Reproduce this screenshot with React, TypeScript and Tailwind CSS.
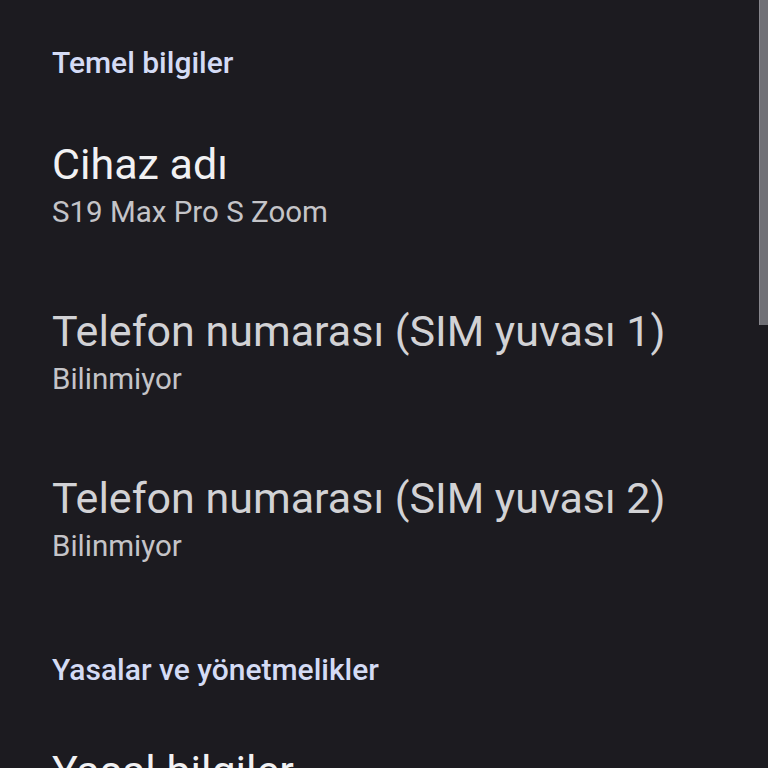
import React from "react";

const font = { fontFamily: "Roboto, 'Noto Sans', sans-serif" };

function Header({ text, pt }: { text: string; pt: string }) {
  return (
    <div className={`${pt} pb-[22px] pl-[52px]`}>
      <div className="text-[30px] leading-[36px] font-medium text-[#d4dbf5]">{text}</div>
    </div>
  );
}

function Item({ title, sub, dim }: { title: string; sub?: string; dim?: boolean }) {
  return (
    <div className="pt-[35px] pb-[36px] pl-[52px]">
      <div className={`text-[43px] leading-[52px] ${dim ? "text-[#d2d2d5]" : "text-[#f1f1f3]"}`}>{title}</div>
      {sub && <div className="text-[29.5px] leading-[44px] text-[#c4c4c8]">{sub}</div>}
    </div>
  );
}

export default function App() {
  return (
    <div className="relative w-[768px] h-[768px] overflow-hidden bg-[#1c1b20]" style={font}>
      <div className="flex flex-col">
        <Header text="Temel bilgiler" pt="pt-[45px]" />
        <Item title="Cihaz adı" sub="S19 Max Pro S Zoom" />
        <Item title="Telefon numarası (SIM yuvası 1)" sub="Bilinmiyor" dim />
        <Item title="Telefon numarası (SIM yuvası 2)" sub="Bilinmiyor" dim />
        <Header text="Yasalar ve yönetmelikler" pt="pt-[48px]" />
        <Item title="Yasal bilgiler" />
      </div>
      <div className="absolute right-0 top-0 w-[9px] h-[325px] bg-[#707076] border-l border-[#86868c]" />
    </div>
  );
}
